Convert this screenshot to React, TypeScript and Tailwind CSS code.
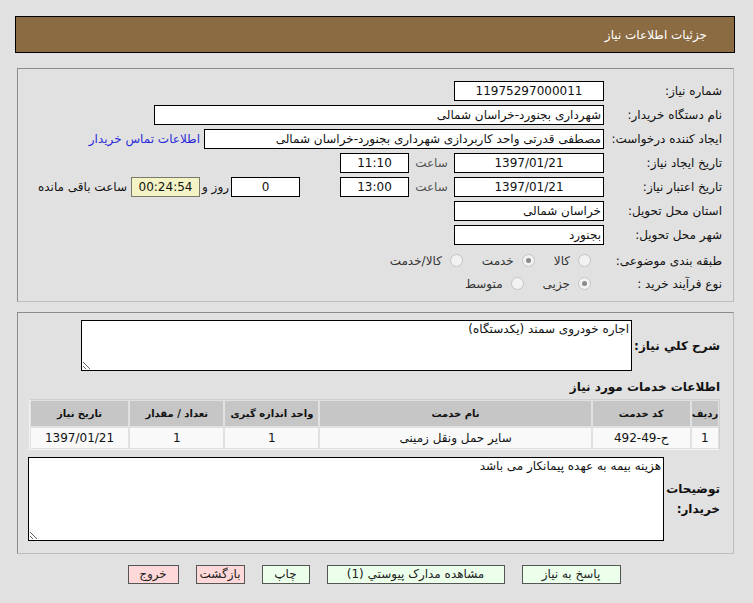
import React from "react";

const font = { fontFamily: '"DejaVu Sans", Tahoma, sans-serif' };

function Field({ w, children, center = false }: { w: string; children?: React.ReactNode; center?: boolean }) {
  return (
    <div
      className={`${w} h-[20px] shrink-0 border border-black bg-white px-[2px] text-[12px] leading-[18px] whitespace-nowrap overflow-hidden ${
        center ? "text-center" : "text-right"
      }`}
    >
      {children}
    </div>
  );
}

function Radio({ checked = false, label }: { checked?: boolean; label: string }) {
  return (
    <div className="flex items-center gap-[8px]">
      <span className="w-[13px] h-[13px] rounded-full border border-[#c4c4c4] bg-[#f2f2f2] flex items-center justify-center">
        {checked && <span className="w-[5px] h-[5px] rounded-full bg-[#8a8a8a]" />}
      </span>
      <span className="text-[12px] text-[#333]">{label}</span>
    </div>
  );
}

function Row({ label, children }: { label: string; children: React.ReactNode }) {
  return (
    <div className="flex items-center h-[24px]">
      <div className="w-[118px] shrink-0 text-[12px] whitespace-nowrap">{label}</div>
      <div className="flex items-center">{children}</div>
    </div>
  );
}

function Btn({ children, w, pink = false }: { children: React.ReactNode; w: string; pink?: boolean }) {
  return (
    <button
      className={`${w} h-[19px] border border-[#555] text-[12px] leading-[17px] text-[#222] ${
        pink ? "bg-[#ffd9d9]" : "bg-[#ebffeb]"
      }`}
    >
      {children}
    </button>
  );
}

export default function App() {
  const cols = [
    { h: "ردیف", w: "w-[26px]", v: "1" },
    { h: "کد خدمت", w: "w-[97px]", v: "ح-49-492" },
    { h: "نام خدمت", w: "w-[270px]", v: "سایر حمل ونقل زمینی" },
    { h: "واحد اندازه گیری", w: "w-[93px]", v: "1" },
    { h: "تعداد / مقدار", w: "w-[93px]", v: "1" },
    { h: "تاریخ نیاز", w: "w-[97px]", v: "1397/01/21" },
  ];

  return (
    <div dir="rtl" style={font} className="w-[753px] h-[603px] bg-[#e1e1e1] text-[#111] pt-[16px] overflow-hidden">
      {/* header */}
      <div className="mr-[18px] w-[720px] h-[37px] border border-black bg-[#8b6b41] flex items-center pr-[27px] text-white text-[12px]">
        جزئیات اطلاعات نیاز
      </div>

      {/* main info panel */}
      <div className="mt-[15px] mr-[19px] w-[717px] h-[234px] border border-[#8c8c8c] border-r-[#bdbdbd] border-b-[#bdbdbd] pt-[10px] pr-[11px]">
        <Row label="شماره نیاز:">
          <Field w="w-[150px]" center>
            11975297000011
          </Field>
        </Row>
        <Row label="نام دستگاه خریدار:">
          <Field w="w-[450px]">شهرداری بجنورد-خراسان شمالی</Field>
        </Row>
        <Row label="ایجاد کننده درخواست:">
          <Field w="w-[400px]">مصطفی  قدرتی واحد کاربردازی شهرداری بجنورد-خراسان شمالی</Field>
          <span className="mr-[4px] text-[12px] text-[#2b2bd9] whitespace-nowrap">اطلاعات تماس خریدار</span>
        </Row>
        <Row label="تاریخ ایجاد نیاز:">
          <Field w="w-[150px]" center>
            1397/01/21
          </Field>
          <span className="w-[45px] text-center text-[12px] text-[#555]">ساعت</span>
          <Field w="w-[69px]" center>
            11:10
          </Field>
        </Row>
        <Row label="تاریخ اعتبار نیاز:">
          <Field w="w-[150px]" center>
            1397/01/21
          </Field>
          <span className="w-[45px] text-center text-[12px] text-[#555]">ساعت</span>
          <Field w="w-[69px]" center>
            13:00
          </Field>
          <div className="mr-[40px]">
            <Field w="w-[69px]" center>
              0
            </Field>
          </div>
          <span className="w-[31px] text-center text-[12px] whitespace-nowrap">روز و</span>
          <div className="w-[69px] h-[20px] border border-[#7a7a6a] bg-[#f3f3c6] text-center text-[12px] leading-[18px]">
            00:24:54
          </div>
          <span className="mr-[4px] text-[12px] whitespace-nowrap">ساعت باقی مانده</span>
        </Row>
        <Row label="استان محل تحویل:">
          <Field w="w-[150px]">خراسان شمالی</Field>
        </Row>
        <Row label="شهر محل تحویل:">
          <Field w="w-[150px]">بجنورد</Field>
        </Row>
        <div className="flex items-center h-[23px] mt-[2px]">
          <div className="w-[118px] shrink-0 text-[12px] whitespace-nowrap">طبقه بندی موضوعی:</div>
          <div className="flex items-center gap-[19px] mr-[13px]">
            <Radio label="کالا" />
            <Radio label="خدمت" checked />
            <Radio label="کالا/خدمت" />
          </div>
        </div>
        <div className="flex items-center h-[23px]">
          <div className="w-[118px] shrink-0 text-[12px] whitespace-nowrap">نوع فرآیند خرید :</div>
          <div className="flex items-center gap-[19px] mr-[13px]">
            <Radio label="جزیی" checked />
            <Radio label="متوسط" />
          </div>
        </div>
      </div>

      {/* second panel */}
      <div className="mt-[10px] mr-[19px] w-[717px] h-[242px] border border-[#8c8c8c] border-r-[#bdbdbd] border-b-[#bdbdbd] pt-[7px] pr-[13px]">
        <div className="flex items-center">
          <div className="w-[88px] shrink-0 text-[12px] font-bold whitespace-nowrap">شرح کلي نیاز:</div>
          <textarea
            readOnly
            className="w-[551px] h-[51px] border border-black bg-white text-[12px] px-[2px] py-0 leading-[16px] outline-none"
            defaultValue="اجاره خودروی سمند (یکدستگاه)"
          />
        </div>
        <div className="mt-[7px] text-[12px] font-bold">اطلاعات خدمات مورد نیاز</div>
        <div className="mt-[3px] ml-[12px] w-[691px] border border-[#f2f2f2] border-t-[#cfcfcf] border-r-[#cfcfcf] p-[1px]">
          <div className="flex gap-[2px]">
            {cols.map((c) => (
              <div key={c.h} className={`${c.w} grow h-[25px] bg-[#c6c6c6] flex items-center justify-center text-[10px] font-bold whitespace-nowrap`}>
                {c.h}
              </div>
            ))}
          </div>
          <div className="flex gap-[2px] mt-[2px]">
            {cols.map((c) => (
              <div key={c.h} className={`${c.w} grow h-[20px] bg-[#f9f9f9] flex items-center justify-center text-[12px] whitespace-nowrap`}>
                {c.v}
              </div>
            ))}
          </div>
        </div>
        <div className="flex items-center mt-[7px]">
          <div className="w-[56px] shrink-0 text-[12px] font-bold leading-[20px] whitespace-nowrap">
            توضیحات
            <br />
            خریدار:
          </div>
          <textarea
            readOnly
            className="w-[636px] h-[84px] border border-black bg-white text-[12px] px-[2px] py-0 leading-[16px] outline-none"
            defaultValue="هزینه بیمه به عهده پیمانکار می باشد"
          />
        </div>
      </div>

      {/* buttons */}
      <div className="mt-[11px] flex justify-center gap-[17px] pr-[5px]">
        <Btn w="w-[99px]">پاسخ به نیاز</Btn>
        <Btn w="w-[178px]">مشاهده مدارک پیوستي (1)</Btn>
        <Btn w="w-[48px]">چاپ</Btn>
        <Btn w="w-[49px]" pink>
          بازگشت
        </Btn>
        <Btn w="w-[51px]" pink>
          خروج
        </Btn>
      </div>
    </div>
  );
}
